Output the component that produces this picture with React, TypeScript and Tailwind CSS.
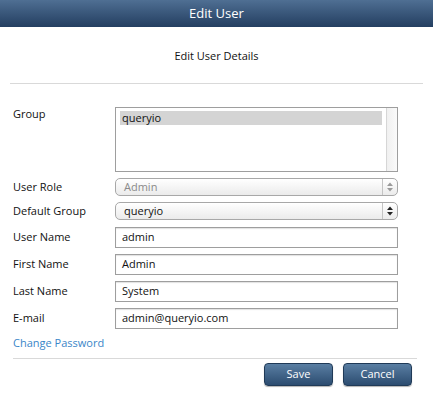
import React from "react";

const font = { fontFamily: '"Open Sans", "DejaVu Sans", sans-serif' };

function Arrows({ dim }: { dim?: boolean }) {
  const c = dim ? "#9a9a9a" : "#222";
  return (
    <svg width="6" height="10" viewBox="0 0 6 10">
      <path d="M0 4 L3 0.5 L6 4 Z" fill={c} />
      <path d="M0 6 L3 9.5 L6 6 Z" fill={c} />
    </svg>
  );
}

function Row({ label, children, className = "" }: { label: string; children: React.ReactNode; className?: string }) {
  return (
    <div className={`flex items-center ${className}`}>
      <div className="w-[102px] shrink-0 text-[11px] text-[#111]">{label}</div>
      <div className="w-[283px]">{children}</div>
    </div>
  );
}

function Select({ value, disabled }: { value: string; disabled?: boolean }) {
  return (
    <div className="flex h-[18px] items-stretch rounded-[5px] border border-[#a8a8a8] bg-gradient-to-b from-white to-[#ebebeb] shadow-[inset_0_1px_0_#fff]">
      <div className={`flex flex-1 items-center pl-[8px] text-[11px] ${disabled ? "text-[#8a8a8a]" : "text-[#111]"}`}>{value}</div>
      <div className="flex w-[15px] items-center justify-center border-l border-[#c4c4c4]">
        <Arrows dim={disabled} />
      </div>
    </div>
  );
}

function Input({ value }: { value: string }) {
  return (
    <div className="flex h-[21px] items-center border border-[#9e9e9e] bg-white pl-[6px] text-[11px] text-[#111] shadow-[inset_0_1px_1px_rgba(0,0,0,0.12)]">
      {value}
    </div>
  );
}

function Btn({ label }: { label: string }) {
  return (
    <div className="flex h-[23px] w-[69px] items-center justify-center rounded-[4px] border border-[#203a57] bg-gradient-to-b from-[#5a7fa3] to-[#2c4c70] text-[11px] text-white shadow-[0_1px_1px_rgba(0,0,0,0.3)]">
      {label}
    </div>
  );
}

export default function App() {
  return (
    <div className="h-[404px] w-[433px] bg-white" style={font}>
      <div className="flex h-[27px] items-center justify-center bg-gradient-to-b from-[#4f6f93] to-[#243f61] text-[13px] text-white">
        Edit User
      </div>
      <div className="flex h-[56px] items-center justify-center pt-[2px] text-[11px] text-[#111]">Edit User Details</div>
      <div className="mx-[10px] h-px bg-[#d9d9d9]" />
      <div className="flex flex-col px-[13px] pt-[23px]">
        <div className="flex items-start">
          <div className="-mt-[1px] w-[102px] shrink-0 text-[11px] text-[#111]">Group</div>
          <div className="flex h-[65px] w-[283px] border border-[#9e9e9e] bg-white">
            <div className="flex-1 pl-[4px] pt-[3px] pr-[4px]">
              <div className="flex h-[14px] items-center bg-[#d4d4d4] pl-[2px] text-[11px] text-[#111]">queryio</div>
            </div>
            <div className="w-[11px] border-l border-[#d6d6d6] bg-gradient-to-r from-[#f0f0f0] to-[#fafafa]" />
          </div>
        </div>
        <Row label="User Role" className="mt-[6px]"><Select value="Admin" disabled /></Row>
        <Row label="Default Group" className="mt-[6px]"><Select value="queryio" /></Row>
        <Row label="User Name" className="mt-[7px]"><Input value="admin" /></Row>
        <Row label="First Name" className="mt-[6px]"><Input value="Admin" /></Row>
        <Row label="Last Name" className="mt-[6px]"><Input value="System" /></Row>
        <Row label="E-mail" className="mt-[6px]"><Input value="admin@queryio.com" /></Row>
        <div className="mt-[6px] text-[11px] text-[#3a86c8]">Change Password</div>
        <div className="mr-[3px] mt-[6px] h-px bg-[#d9d9d9]" />
        <div className="mt-[4px] flex justify-end gap-[10px] pr-[8px]">
          <Btn label="Save" />
          <Btn label="Cancel" />
        </div>
      </div>
    </div>
  );
}
